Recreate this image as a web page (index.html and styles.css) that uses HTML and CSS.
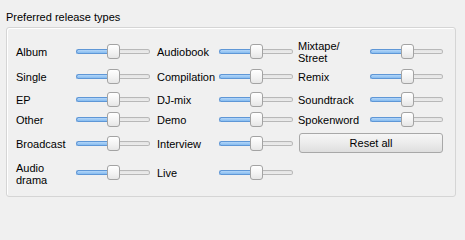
FILE: index.html
```html
<!DOCTYPE html>
<html>
<head>
<meta charset="utf-8">
<link rel="stylesheet" href="styles.css">
</head>
<body>
<div class="page">
  <div class="title">Preferred release types</div>
  <div class="group">
    <div class="grid">
      <div class="label">Album</div>
      <div class="cell"><div class="slider"><div class="fill"></div><div class="thumb"></div><div class="rest"></div></div></div>
      <div class="label">Audiobook</div>
      <div class="cell"><div class="slider"><div class="fill"></div><div class="thumb"></div><div class="rest"></div></div></div>
      <div class="label two">Mixtape/<br>Street</div>
      <div class="cell"><div class="slider"><div class="fill"></div><div class="thumb"></div><div class="rest"></div></div></div>

      <div class="label">Single</div>
      <div class="cell"><div class="slider"><div class="fill"></div><div class="thumb"></div><div class="rest"></div></div></div>
      <div class="label">Compilation</div>
      <div class="cell"><div class="slider"><div class="fill"></div><div class="thumb"></div><div class="rest"></div></div></div>
      <div class="label">Remix</div>
      <div class="cell"><div class="slider"><div class="fill"></div><div class="thumb"></div><div class="rest"></div></div></div>

      <div class="label">EP</div>
      <div class="cell"><div class="slider"><div class="fill"></div><div class="thumb"></div><div class="rest"></div></div></div>
      <div class="label">DJ-mix</div>
      <div class="cell"><div class="slider"><div class="fill"></div><div class="thumb"></div><div class="rest"></div></div></div>
      <div class="label">Soundtrack</div>
      <div class="cell"><div class="slider"><div class="fill"></div><div class="thumb"></div><div class="rest"></div></div></div>

      <div class="label">Other</div>
      <div class="cell"><div class="slider"><div class="fill"></div><div class="thumb"></div><div class="rest"></div></div></div>
      <div class="label">Demo</div>
      <div class="cell"><div class="slider"><div class="fill"></div><div class="thumb"></div><div class="rest"></div></div></div>
      <div class="label">Spokenword</div>
      <div class="cell"><div class="slider"><div class="fill"></div><div class="thumb"></div><div class="rest"></div></div></div>

      <div class="label">Broadcast</div>
      <div class="cell"><div class="slider"><div class="fill"></div><div class="thumb"></div><div class="rest"></div></div></div>
      <div class="label">Interview</div>
      <div class="cell"><div class="slider"><div class="fill"></div><div class="thumb"></div><div class="rest"></div></div></div>
      <div class="btncell"><button class="reset">Reset all</button></div>

      <div class="label two">Audio<br>drama</div>
      <div class="cell"><div class="slider"><div class="fill"></div><div class="thumb"></div><div class="rest"></div></div></div>
      <div class="label">Live</div>
      <div class="cell"><div class="slider"><div class="fill"></div><div class="thumb"></div><div class="rest"></div></div></div>
    </div>
  </div>
</div>
</body>
</html>
```
FILE: styles.css
```css
html, body {
  margin: 0;
  padding: 0;
  background: #f0f0f0;
}
body {
  font-family: "Liberation Sans", Arial, sans-serif;
  font-size: 11px;
  color: #000;
}
.page {
  width: 465px;
  height: 204px;
  padding: 11px 0 0 6px;
  box-sizing: border-box;
  overflow: hidden;
}
.title {
  height: 16px;
  line-height: 13px;
}
.group {
  width: 450px;
  height: 170px;
  box-sizing: border-box;
  border: 1px solid #d5d5d5;
  border-radius: 3px;
  box-shadow: inset 1px 1px 0 #fff;
  padding: 10px 0 8px 9px;
}
.grid {
  display: grid;
  grid-template-columns: 60px 81px 62px 79px 72px 73px;
  grid-template-rows: 26px 24px 22px 19px 28px 31px;
  align-items: center;
}
.label {
  line-height: 13px;
  padding-top: 2px;
  white-space: nowrap;
}
.label.two {
  line-height: 12px;
}
.cell {
  display: flex;
  align-items: center;
}
.slider {
  width: 74px;
  height: 15px;
  display: flex;
  align-items: center;
}
.fill {
  flex: 0 0 32px;
  height: 5px;
  box-sizing: border-box;
  border: 1px solid #5f97d6;
  border-right: none;
  border-radius: 3px 0 0 3px;
  background: linear-gradient(#b4d6f8, #86bcf0);
}
.thumb {
  flex: 0 0 13px;
  height: 15px;
  box-sizing: border-box;
  margin: 0 -1px;
  border: 1px solid #a3a3a3;
  border-radius: 3px;
  background: linear-gradient(#ffffff, #f2f2f2 60%, #e6e6e6);
  position: relative;
  z-index: 1;
}
.rest {
  flex: 1 1 auto;
  height: 5px;
  box-sizing: border-box;
  border: 1px solid #b8b8b8;
  border-left: none;
  border-radius: 0 3px 3px 0;
  background: linear-gradient(#e4e4e4, #ececec);
}
.btncell {
  grid-column: 5 / span 2;
  display: flex;
  align-items: center;
  padding-left: 1px;
}
.reset {
  width: 147px;
  height: 20px;
  box-sizing: border-box;
  border: 1px solid #a8a8a8;
  border-radius: 3px;
  background: linear-gradient(#f6f6f6, #ececec 50%, #dedede);
  font-family: "Liberation Sans", Arial, sans-serif;
  font-size: 11px;
  color: #000;
  padding: 0;
  margin: 0;
}
```
